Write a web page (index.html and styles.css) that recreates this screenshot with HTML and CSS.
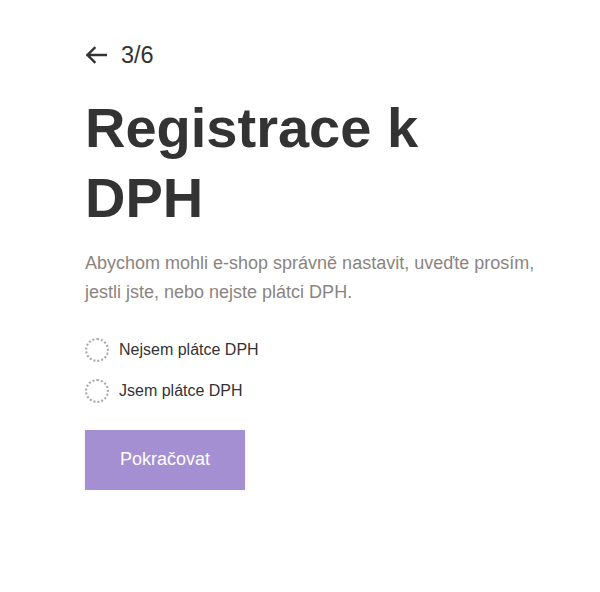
FILE: index.html
```html
<!DOCTYPE html>
<html lang="cs">
<head>
<meta charset="utf-8">
<title>Registrace k DPH</title>
<link rel="stylesheet" href="styles.css">
</head>
<body>
<main class="page">
  <div class="step">
    <svg class="back" width="22" height="18" viewBox="0 0 22 18" aria-hidden="true">
      <path d="M21 9H2.5M9.5 2L2.5 9l7 7" fill="none" stroke="#333" stroke-width="2.4" stroke-linecap="square"/>
    </svg>
    <span class="step-count">3/6</span>
  </div>
  <h1 class="title">Registrace k DPH</h1>
  <p class="lead">Abychom mohli e-shop správně nastavit, uveďte prosím, jestli jste, nebo nejste plátci DPH.</p>
  <div class="options">
    <label class="option"><span class="radio"></span><span class="option-label">Nejsem plátce DPH</span></label>
    <label class="option"><span class="radio"></span><span class="option-label">Jsem plátce DPH</span></label>
  </div>
  <button class="primary" type="button">Pokračovat</button>
</main>
</body>
</html>
```
FILE: styles.css
```css
html, body {
  margin: 0;
  padding: 0;
  background: #fff;
}
body {
  font-family: "Liberation Sans", Arial, sans-serif;
  color: #333;
}
.page {
  display: flex;
  flex-direction: column;
  align-items: flex-start;
  padding: 44px 0 0 85px;
  width: 470px;
}
.step {
  display: flex;
  align-items: center;
  gap: 14px;
  height: 22px;
}
.back {
  display: block;
}
.step-count {
  font-size: 23.5px;
  line-height: 22px;
  color: #333;
}
.title {
  margin: 27px 0 0;
  font-size: 56px;
  line-height: 70px;
  font-weight: 700;
  color: #333;
  width: 400px;
}
.lead {
  margin: 16px 0 0;
  font-size: 18px;
  line-height: 28.8px;
  color: #8a8481;
}
.options {
  display: flex;
  flex-direction: column;
  gap: 17px;
  margin-top: 31px;
}
.option {
  display: flex;
  align-items: center;
  gap: 10px;
  cursor: pointer;
}
.radio {
  box-sizing: border-box;
  width: 24px;
  height: 24px;
  border-radius: 50%;
  border: 2px dotted #a8a8a8;
}
.option-label {
  font-size: 16px;
  line-height: 24px;
  color: #333;
}
.primary {
  margin-top: 27px;
  width: 160px;
  height: 60px;
  border: 0;
  border-radius: 0;
  background: #a48fd3;
  color: #fff;
  font-family: "Liberation Sans", Arial, sans-serif;
  font-size: 18px;
  box-shadow: 0 2px 4px rgba(0,0,0,0.08);
  cursor: pointer;
}
```
